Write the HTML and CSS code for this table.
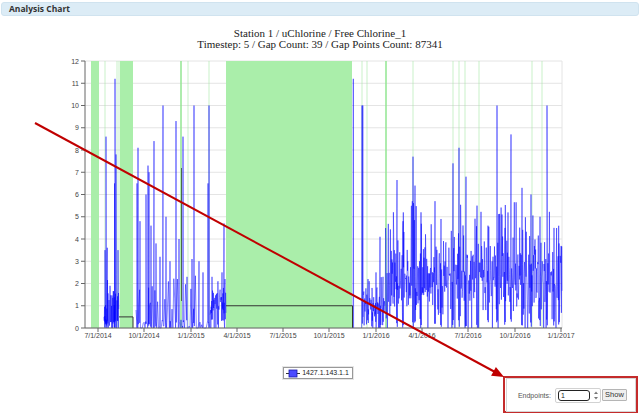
FILE: index.html
```html
<!DOCTYPE html>
<html>
<head>
<meta charset="utf-8">
<title>Analysis Chart</title>
<link rel="stylesheet" href="styles.css">
</head>
<body>
<div class="page">
  <div class="panel-head">Analysis Chart</div>
  <div class="chart-title">Station 1 / uChlorine / Free Chlorine_1<br>Timestep: 5 / Gap Count: 39 / Gap Points Count: 87341</div>
  <svg class="plot" viewBox="0 52 640 292" width="640" height="292">
    <g class="grid">
      <line x1="85" x2="562" y1="328" y2="328"/>
      <line x1="85" x2="562" y1="305.75" y2="305.75"/>
      <line x1="85" x2="562" y1="283.5" y2="283.5"/>
      <line x1="85" x2="562" y1="261.25" y2="261.25"/>
      <line x1="85" x2="562" y1="239" y2="239"/>
      <line x1="85" x2="562" y1="216.75" y2="216.75"/>
      <line x1="85" x2="562" y1="194.5" y2="194.5"/>
      <line x1="85" x2="562" y1="172.25" y2="172.25"/>
      <line x1="85" x2="562" y1="150" y2="150"/>
      <line x1="85" x2="562" y1="127.75" y2="127.75"/>
      <line x1="85" x2="562" y1="105.5" y2="105.5"/>
      <line x1="85" x2="562" y1="83.25" y2="83.25"/>
      <line x1="85" x2="562" y1="61" y2="61"/>
      <line x1="562" x2="562" y1="61" y2="328"/>
    </g>
    <g class="gap-band">
      <rect x="91" y="61" width="8" height="267"/>
      <rect x="120" y="61" width="13" height="267"/>
      <rect x="226" y="61" width="126" height="267"/>
    </g>
    <g class="gap-line">
      <line x1="105" x2="105" y1="61" y2="328"/>
      <line x1="117" x2="117" y1="61" y2="328"/>
      <line x1="119" x2="119" y1="61" y2="328"/>
      <line x1="188" x2="188" y1="61" y2="328"/>
      <line x1="209" x2="209" y1="61" y2="328"/>
      <line x1="362" x2="362" y1="61" y2="328"/>
      <line x1="367" x2="367" y1="61" y2="328"/>
      <line x1="413" x2="413" y1="61" y2="328"/>
      <line x1="453" x2="453" y1="61" y2="328"/>
      <line x1="459" x2="459" y1="61" y2="328"/>
      <line x1="465" x2="465" y1="61" y2="328"/>
      <line x1="479" x2="479" y1="61" y2="328"/>
      <line x1="532" x2="532" y1="61" y2="328"/>
      <line x1="542" x2="542" y1="61" y2="328"/>
    </g>
    <g class="gap-line strong">
      <line x1="181" x2="181" y1="61" y2="328"/>
      <line x1="386" x2="386" y1="61" y2="328"/>
    </g>
    <path id="series" class="series" d=""/>
    <g class="fill-line">
      <polyline points="119,316.9 133,316.9 133,328"/>
      <polyline points="226,305.75 352.5,305.75 352.5,328"/>
      <line x1="181.5" x2="181.5" y1="168" y2="301"/>
    </g>
    <g class="axis">
      <line x1="85" x2="85" y1="61" y2="328"/>
      <line x1="85" x2="562" y1="328" y2="328"/>
      <line x1="81" x2="85" y1="328" y2="328"/>
      <line x1="81" x2="85" y1="305.75" y2="305.75"/>
      <line x1="81" x2="85" y1="283.5" y2="283.5"/>
      <line x1="81" x2="85" y1="261.25" y2="261.25"/>
      <line x1="81" x2="85" y1="239" y2="239"/>
      <line x1="81" x2="85" y1="216.75" y2="216.75"/>
      <line x1="81" x2="85" y1="194.5" y2="194.5"/>
      <line x1="81" x2="85" y1="172.25" y2="172.25"/>
      <line x1="81" x2="85" y1="150" y2="150"/>
      <line x1="81" x2="85" y1="127.75" y2="127.75"/>
      <line x1="81" x2="85" y1="105.5" y2="105.5"/>
      <line x1="81" x2="85" y1="83.25" y2="83.25"/>
      <line x1="81" x2="85" y1="61" y2="61"/>
      <line x1="98" x2="98" y1="328" y2="332"/>
      <line x1="144" x2="144" y1="328" y2="332"/>
      <line x1="191" x2="191" y1="328" y2="332"/>
      <line x1="237" x2="237" y1="328" y2="332"/>
      <line x1="283" x2="283" y1="328" y2="332"/>
      <line x1="329" x2="329" y1="328" y2="332"/>
      <line x1="376" x2="376" y1="328" y2="332"/>
      <line x1="422" x2="422" y1="328" y2="332"/>
      <line x1="468" x2="468" y1="328" y2="332"/>
      <line x1="515" x2="515" y1="328" y2="332"/>
      <line x1="561" x2="561" y1="328" y2="332"/>
    </g>
    <g class="tick-label y-labels">
      <text x="79" y="330.5">0</text>
      <text x="79" y="308.25">1</text>
      <text x="79" y="286">2</text>
      <text x="79" y="263.75">3</text>
      <text x="79" y="241.5">4</text>
      <text x="79" y="219.25">5</text>
      <text x="79" y="197">6</text>
      <text x="79" y="174.75">7</text>
      <text x="79" y="152.5">8</text>
      <text x="79" y="130.25">9</text>
      <text x="79" y="108">10</text>
      <text x="79" y="85.75">11</text>
      <text x="79" y="63.5">12</text>
    </g>
    <g class="tick-label x-labels">
      <text x="98" y="338">7/1/2014</text>
      <text x="144" y="338">10/1/2014</text>
      <text x="191" y="338">1/1/2015</text>
      <text x="237" y="338">4/1/2015</text>
      <text x="283" y="338">7/1/2015</text>
      <text x="329" y="338">10/1/2015</text>
      <text x="376" y="338">1/1/2016</text>
      <text x="422" y="338">4/1/2016</text>
      <text x="468" y="338">7/1/2016</text>
      <text x="515" y="338">10/1/2016</text>
      <text x="561" y="338">1/1/2017</text>
    </g>
  </svg>
  <div class="footer">
    <div class="footer-spacer"></div>
    <div class="legend">
      <svg class="legend-key" width="14" height="9" viewBox="0 0 14 9">
        <line x1="0" x2="14" y1="4.5" y2="4.5"/>
        <rect x="3" y="1" width="8" height="7"/>
      </svg>
      <span class="legend-text">1427.1.143.1.1</span>
    </div>
    <div class="endpoints-mark">
      <div class="endpoints">
        <label class="ep-label" for="ep">Endpoints:</label>
        <span class="spin">
          <input id="ep" class="spin-input" type="text" value="1">
          <svg class="spin-arrows" width="6" height="11" viewBox="0 0 6 11">
            <path d="M1 4 L3 1.5 L5 4 Z"/>
            <path d="M1 7 L3 9.5 L5 7 Z"/>
          </svg>
        </span>
        <button class="btn" type="button">Show</button>
      </div>
    </div>
  </div>
  <svg class="annotation" width="640" height="419" viewBox="0 0 640 419">
    <line x1="35" y1="123" x2="495" y2="372"/>
    <polygon points="504,377 491.1,375.7 495.9,366.9"/>
  </svg>
</div>
<script src="script.js"></script>
</body>
</html>
```

FILE: styles.css
```css
* { box-sizing: border-box; }
html, body { margin: 0; padding: 0; background: #fff; }
body { font-family: "Liberation Sans", Arial, sans-serif; color: #222; }

.page {
  position: relative;
  width: 640px;
  height: 419px;
  overflow: hidden;
}

.panel-head {
  margin: 2px 1px 0;
  height: 14px;
  padding-left: 7px;
  background: #dcecf6;
  border: 1px solid #d0e3ef;
  border-radius: 3px;
  font-family: "Open Sans", "Liberation Sans", sans-serif;
  font-weight: 700;
  font-size: 8.5px;
  line-height: 12px;
  color: #333;
}

.chart-title {
  margin-top: 12px;
  text-align: center;
  font-family: "Liberation Serif", "Times New Roman", serif;
  font-size: 11px;
  line-height: 11px;
  color: #222;
}

.plot { display: block; margin-top: 2px; }

.grid line { stroke: #e4e4e4; stroke-width: 1; }
.gap-band rect { fill: #aaeeaa; }
.gap-line line { stroke: #9fe89f; stroke-width: 1; opacity: 0.55; }
.gap-line.strong line { stroke: #8fe68f; stroke-width: 1.6; opacity: 0.9; }
.series { fill: none; stroke: #0000ff; stroke-opacity: 0.6; stroke-width: 0.8; stroke-linejoin: round; }
.fill-line polyline, .fill-line line { fill: none; stroke: #333; stroke-width: 1; }
.fill-line line { stroke: #4a6a4a; }
.axis line { stroke: #666; stroke-width: 1; }
.tick-label text { font-family: "Liberation Sans", Arial, sans-serif; font-size: 7px; fill: #444; }
.y-labels text { text-anchor: end; }
.x-labels text { text-anchor: middle; }

.footer {
  display: grid;
  grid-template-columns: 1fr auto 1fr;
  align-items: start;
  padding-right: 2px;
}

.legend {
  margin-top: 23px;
  margin-right: 2px;
  height: 12px;
  display: flex;
  align-items: center;
  gap: 2px;
  padding: 0 3px 0 2px;
  border: 1px solid #999;
  box-shadow: 0 0 0 1px #e6e6e6;
  background: #fff;
}
.legend-key { display: block; }
.legend-key line { stroke: #333; stroke-width: 1; }
.legend-key rect { fill: #4b4bff; stroke: #1a1aa8; stroke-width: 0.8; }
.legend-text { font-size: 7px; line-height: 10px; color: #222; }

.endpoints-mark {
  justify-self: end;
  margin-top: 32px;
  width: 135px;
  height: 37px;
  border: 2px solid #c42b2b;
  padding: 0 0 0 1px;
}
.endpoints {
  height: 34px;
  display: flex;
  align-items: center;
  justify-content: flex-end;
  padding-right: 8px;
  border: 1px solid #d6d6d6;
  background: #fff;
}
.ep-label {
  font-size: 7px;
  color: #555;
  margin-right: 4px;
}
.spin {
  display: flex;
  align-items: center;
  height: 15px;
  width: 46px;
  padding-left: 2px;
  border: 1px solid #d2d2d2;
  border-radius: 2px;
  background: #fff;
}
.spin-input {
  width: 32px;
  height: 11px;
  margin: 0;
  padding: 0 2px;
  border: 1.5px solid #222;
  border-radius: 3px;
  font-family: "Liberation Sans", Arial, sans-serif;
  font-size: 7px;
  line-height: 8px;
  color: #222;
  background: #fff;
  outline: none;
}
.spin-arrows { display: block; margin-left: 3px; }
.spin-arrows path { fill: #777; }
.btn {
  margin-left: 1px;
  width: 25px;
  height: 12px;
  padding: 0;
  border: 1px solid #b5b5b5;
  border-radius: 1px;
  background: #efefef;
  font-family: "Liberation Sans", Arial, sans-serif;
  font-size: 7.5px;
  line-height: 10px;
  color: #333;
}

.annotation {
  position: absolute;
  left: 0;
  top: 0;
  pointer-events: none;
}
.annotation line { stroke: #c00000; stroke-width: 2; }
.annotation polygon { fill: #c00000; }
```

FILE: script.js
```js
(function () {
  var seed = 20140701;
  function rnd() {
    seed = (seed * 16807) % 2147483647;
    return (seed - 1) / 2147483646;
  }
  var Y0 = 328, K = 22.25;
  function Y(v) { return (Y0 - v * K).toFixed(2); }
  var d = [];
  function run(pts) {
    pts.sort(function (a, b) { return a[0] - b[0]; });
    for (var i = 0; i < pts.length; i++) {
      d.push((i ? 'L' : 'M') + pts[i][0].toFixed(2) + ' ' + Y(Math.max(0, Math.min(12, pts[i][1]))));
    }
  }
  function noise(x0, x1, step, fn, spikes) {
    var p = [];
    for (var x = x0; x <= x1; x += step) { p.push([x, fn(x)]); }
    (spikes || []).forEach(function (sp) {
      p.push([sp[0] - 0.3, rnd() * 0.4]);
      p.push([sp[0], sp[1]]);
      p.push([sp[0] + 0.3, rnd() * 0.4]);
    });
    return p;
  }
  function g3() { return rnd() + rnd() + rnd() - 1.5; }

  // early 2014 segment
  run(noise(104, 118.8, 0.25, function () {
    var r = rnd();
    if (r < 0.3) return 0;
    if (r < 0.4) return 1.5 + rnd() * 2.2;
    return rnd() * 1.9;
  }, [[105, 3.5], [106, 8.6], [107, 2.2], [114.5, 6.5], [115, 11.2], [116, 7.8], [118, 3.5]]));

  // late 2014 sparse segment
  run(noise(136, 210, 0.9, function () {
    return rnd() < 0.5 ? 0 : rnd() * 2.4;
  }, [[137, 6.5], [138, 8.1], [140, 4.8], [146, 6], [148, 7.3], [149, 7], [151, 4.6],
      [154, 8.4], [156, 3.8], [160, 3.2], [163, 10], [166, 5], [170, 3], [176, 9.3],
      [179, 4], [183, 8.6], [187, 2.3], [192, 3.1], [194, 10], [199, 3], [203, 2.5],
      [208, 6.5], [209, 10]]));

  // early 2015 dense segment
  run(noise(210, 226, 0.28, function () {
    var r = rnd();
    if (r < 0.06) return 0;
    if (r < 0.14) return 1.8 + rnd() * 0.8;
    return 0.6 + rnd() * 1.2;
  }, [[212, 2.3], [218, 2.1], [222, 2.5], [224, 4.7], [225, 2.2]]));

  // after long gap
  run([[353, 0], [353.3, 11.2], [353.6, 0]]);
  run([[361.6, 0], [362, 10], [362.4, 0.2], [362.8, 10], [363.2, 0.5]]);

  run(noise(363.5, 385, 0.3, function () {
    if (rnd() < 0.05) return 0;
    return 0.95 + g3() * 1.1;
  }, [[368, 2.2], [372, 1.8], [376, 2.5], [380, 4.1], [383, 2.3]]));

  run(noise(385, 562, 0.3, function (x) {
    var base = x < 396 ? 1 + (x - 385) / 11 : 2.2;
    if (x > 430 && x < 480) base = 2.4;
    if (x > 548) base = 2;
    var r = rnd();
    if (r < 0.035) return 0;
    if (r < 0.13) return base + 0.8 + rnd() * 2.8;
    return base + g3() * 1.6;
  }, [[397, 6.65], [403, 4.8], [413, 7.7], [415, 6.4], [421, 5.2], [435, 5.7], [441, 4.9],
      [453, 7.4], [459, 8.1], [466, 6.8], [477, 5.5], [488, 4.6], [497, 10], [505, 4.5],
      [511, 8.7], [522, 6.3], [531, 6], [540, 5], [547, 10], [554, 4.5], [559, 3.8]]));

  document.getElementById('series').setAttribute('d', d.join(''));
})();
```
